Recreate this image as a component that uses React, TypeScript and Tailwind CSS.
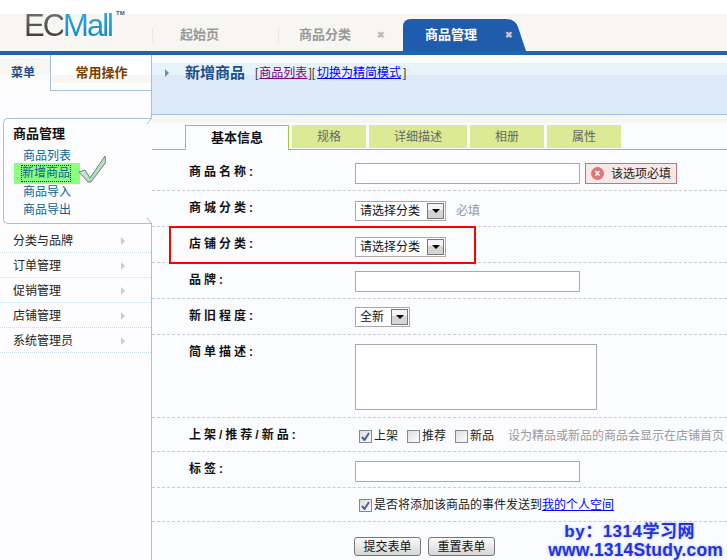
import type { ReactNode } from 'react'

const cjk = "font-['Liberation_Sans','Noto_Sans_CJK_SC',sans-serif]"

function NavTab({ label, closable, className }: { label: string; closable?: boolean; className: string }) {
  return (
    <div className={`flex h-[32px] items-center text-[13px] font-bold text-[#999] ${className}`}>
      <span className="h-[14px] w-px shrink-0 bg-[#f6e0e0]" />
      <span className="ml-[var(--gap)]">{label}</span>
      {closable && <span className="ml-[26px] text-[9px] leading-none text-[#bbb]">✖</span>}
    </div>
  )
}

function ActiveTab() {
  return (
    <div className="relative flex h-[32px] w-[123px] items-center pl-[22px] text-[13px] font-bold text-white">
      {/* tab shape with the soft glow along its lower edge */}
      <svg className="absolute inset-0" width="123" height="32" viewBox="0 0 123 32">
        <defs>
          <radialGradient id="tabGlow" cx="0.5" cy="1" r="0.5">
            <stop offset="0" stopColor="#7d9fcf" />
            <stop offset="1" stopColor="#7d9fcf" stopOpacity="0" />
          </radialGradient>
        </defs>
        <path d="M0 32V8Q0 0 8 0H103Q112 0 115 8L123 32Z" fill="#1f5dac" />
        <ellipse cx="62" cy="32" rx="36" ry="13" fill="url(#tabGlow)" />
      </svg>
      <span className="relative">商品管理</span>
      <span className="relative ml-[28px] text-[9px] leading-none text-[#c8c8c8]">✖</span>
    </div>
  )
}

function Corner({ flip }: { flip?: boolean }) {
  return (
    <svg
      className={`absolute right-0 ${flip ? 'bottom-[-1px] -scale-y-100' : 'top-[-1px]'}`}
      width="6"
      height="6"
      viewBox="0 0 6 6"
    >
      <path d="M0 6H1L6 0" fill="none" stroke="#a6c0da" />
    </svg>
  )
}

function CheckMark() {
  return (
    <svg width="28" height="29" viewBox="0 0 28 29" className="absolute left-[74px] top-[36px]">
      <defs>
        <linearGradient id="tick" x1="0" y1="0" x2="1" y2="1">
          <stop offset="0" stopColor="#e4f4e4" />
          <stop offset="1" stopColor="#9fd0a6" />
        </linearGradient>
      </defs>
      <path d="M1 17L7 15L12 23L27 1L28 7L13 27L10 27Z" fill="url(#tick)" stroke="#64826f" />
    </svg>
  )
}

function Sidebar() {
  const items = ['分类与品牌', '订单管理', '促销管理', '店铺管理', '系统管理员']
  const links = ['商品列表', '新增商品', '商品导入', '商品导出']
  return (
    <aside className="flex w-[152px] shrink-0 flex-col bg-[#fdfdff]">
      <div className="flex h-[36px] border-r border-[#a6c0da]">
        <div className="flex w-[50px] items-center bg-[linear-gradient(#fff_3px,#f7f6f3_3px,#f7f6f3_20px,#fcfcfc_20px,#fcfcfc_28px,#fdfdff_28px)] pl-[11px] text-[12px] font-bold text-[#1d4f8f]">
          菜单
        </div>
        <div className="flex flex-1 items-center justify-center border-b border-l border-[#a6c0da] bg-[linear-gradient(#fff_20px,#f7f6f3_20px,#f7f6f3_28px,#fff_28px)] pl-[1px] text-[13px] font-bold text-[#7a3e00]">
          常用操作
        </div>
      </div>
      <div className="h-[27px] border-r border-[#a6c0da]" />
      <div className="relative ml-[3px] h-[106px] rounded-l-[5px] border-y border-l border-[#a6c0da] pl-[9px] pt-[6px]">
        <Corner />
        <Corner flip />
        <div className="text-[13px] font-bold leading-[18px] text-[#111]">商品管理</div>
        <div className="mt-[4px] text-[12px] leading-[18px] text-[#0b6594]">
          {links.map((link) =>
            link === '新增商品' ? (
              <div key={link} className="-mb-[1px] -mt-[2px] ml-[1px] flex h-[21px] w-[66px] items-center bg-[#8aff80]">
                <span className="ml-[8px] leading-[15px] outline-1 outline-dotted outline-[#222]">{link}</span>
              </div>
            ) : (
              <div key={link} className="ml-[10px]">
                {link}
              </div>
            ),
          )}
        </div>
        <CheckMark />
      </div>
      <div className="flex flex-1 flex-col border-r border-[#a6c0da] pt-[4px]">
        {items.map((item) => (
          <div
            key={item}
            className="flex h-[25px] shrink-0 items-center justify-between border-b border-dotted border-[#c4dcec] pl-[13px] pr-[26px] pt-[2px] text-[12px] text-[#222]"
          >
            <span>{item}</span>
            <span className="h-0 w-0 border-y-[4px] border-l-[4px] border-y-transparent border-l-[#ccc]" />
          </div>
        ))}
      </div>
    </aside>
  )
}

function Select({ value, className }: { value: string; className: string }) {
  return (
    <div className={`flex h-[20px] items-center justify-between border border-[#a9a9a9] bg-white pl-[4px] pr-[1px] text-[12px] text-[#111] ${className}`}>
      <span>{value}</span>
      <span className="flex h-[16px] w-[17px] items-center justify-center border border-[#777] bg-[linear-gradient(#f4f4f4_40%,#d4d4d4_40%)]">
        <span className="h-0 w-0 border-x-[4px] border-t-[4px] border-x-transparent border-t-black" />
      </span>
    </div>
  )
}

function Checkbox({ checked, label }: { checked?: boolean; label: ReactNode }) {
  return (
    <span className="flex items-center gap-[2px]">
      <span className="flex h-[13px] w-[13px] items-center justify-center border border-[#888] bg-[linear-gradient(135deg,#ddd,#fff)]">
        {checked && (
          <svg width="9" height="9" viewBox="0 0 9 9">
            <path d="M1 5L3.5 8L8 1" fill="none" stroke="#4a5fa8" strokeWidth="2" />
          </svg>
        )}
      </span>
      <span>{label}</span>
    </span>
  )
}

function Row({
  label,
  children,
  className,
  labelClassName = '',
}: {
  label?: string
  children: ReactNode
  className: string
  labelClassName?: string
}) {
  return (
    <div className={`flex shrink-0 border-b border-dashed border-[#ccc] pl-[37px] ${className}`}>
      <div className={`w-[166px] shrink-0 text-[12px] font-bold leading-[16px] tracking-[3px] text-[#111] ${labelClassName}`}>{label}</div>
      <div className="flex min-w-0 flex-1 items-start whitespace-nowrap text-[12px] text-[#222]">{children}</div>
    </div>
  )
}

const inputClass = 'h-[21px] w-[225px] border border-[#a9a9a9] bg-white'

function FormArea() {
  const tabs = [
    { label: '规格', width: 'w-[74px]' },
    { label: '详细描述', width: 'w-[98px]' },
    { label: '相册', width: 'w-[74px]' },
    { label: '属性', width: 'w-[74px]' },
  ]
  return (
    <main className="flex min-w-0 flex-1 flex-col bg-[#fbfcff]">
      <div className="h-[60px] shrink-0 border-b border-[#a6c0da] bg-[linear-gradient(#fdfdfd_8px,#e7f3fa_8px,#e7f3fa_20px,#dce9f6_20px)]">
        <div className="flex items-center pl-[13px] pt-[8px]">
          <span className="h-0 w-0 border-y-[4px] border-l-[4px] border-y-transparent border-l-[#7a8a9a]" />
          <span className="ml-[16px] text-[15px] font-bold leading-[20px] text-[#1d4f8f]">新增商品</span>
          <span className="ml-[10px] text-[12px] text-[#444]">
            [<span className="mx-[1px] text-[#800080] underline">商品列表</span>][
            <span className="mx-[2px] text-[#0000ff] underline">切换为精简模式</span>]
          </span>
        </div>
      </div>
      <div className="flex h-[35px] shrink-0 items-end gap-[3px] border-b border-[#a4c639] bg-[linear-gradient(#f7f6f3_8px,#fbfcff_8px)] pl-[33px]">
        <div className="-mb-px flex h-[25px] w-[104px] items-center justify-center border-x border-t border-[#a4c639] bg-[#fbfcff] text-[13px] font-bold text-[#111]">
          基本信息
        </div>
        {tabs.map((tab) => (
          <div key={tab.label} className={`mb-[1px] flex h-[23px] items-center justify-center bg-[#dcea96] text-[12px] text-[#666] ${tab.width}`}>
            {tab.label}
          </div>
        ))}
      </div>
      <Row label="商品名称:" className="h-[41px] pt-[13px]" labelClassName="mt-[1px]">
        <div className={inputClass} />
        <div className="ml-[5px] flex h-[21px] w-[92px] items-center border border-[#d07070] bg-[#f9e8e8] pl-[5px] text-[#222]">
          <span className="flex h-[13px] w-[13px] items-center justify-center rounded-full bg-[#d87878] text-[10px] font-bold leading-none text-white">×</span>
          <span className="ml-[7px]">该选项必填</span>
        </div>
      </Row>
      <Row label="商城分类:" className="h-[36px] pt-[10px]" labelClassName="-mt-[1px]">
        <Select value="请选择分类" className="w-[91px]" />
        <span className="ml-[10px] mt-[1px] text-[#999]">必填</span>
      </Row>
      <Row label="店铺分类:" className="h-[36px] pt-[10px]" labelClassName="-mt-[1px]">
        <Select value="请选择分类" className="w-[91px]" />
      </Row>
      <Row label="品牌:" className="h-[36px] pt-[8px]" labelClassName="mt-[1px]">
        <div className={inputClass} />
      </Row>
      <Row label="新旧程度:" className="h-[36px] pt-[8px]" labelClassName="mt-[1px]">
        <Select value="全新" className="w-[55px]" />
      </Row>
      <Row label="简单描述:" className="h-[83px] pt-[9px]">
        <div className="h-[66px] w-[242px] border border-[#a9a9a9] bg-white" />
      </Row>
      <Row label="上架/推荐/新品:" className="h-[34px] pt-[10px]" labelClassName="-mt-[1px] tracking-[2.5px]">
        <div className="ml-[4px] flex items-center gap-[9px] leading-[16px]">
          <Checkbox checked label="上架" />
          <Checkbox label="推荐" />
          <Checkbox label="新品" />
          <span className="ml-[5px] text-[#999]">设为精品或新品的商品会显示在店铺首页</span>
        </div>
      </Row>
      <Row label="标签:" className="h-[36px] pt-[9px]">
        <div className={inputClass} />
      </Row>
      <Row className="h-[34px] pt-[9px]">
        <div className="ml-[4px] leading-[16px]">
          <Checkbox
            checked
            label={
              <>
                是否将添加该商品的事件发送到<span className="text-[#0000ff] underline">我的个人空间</span>
              </>
            }
          />
        </div>
      </Row>
      <div className="flex gap-[7px] pl-[202px] pt-[15px]">
        {['提交表单', '重置表单'].map((text) => (
          <button
            key={text}
            className="h-[19px] w-[67px] rounded-[3px] border border-[#777] bg-[linear-gradient(#fbfbfb,#d6d6d6)] text-[12px] leading-none text-[#111]"
          >
            {text}
          </button>
        ))}
      </div>
    </main>
  )
}

export default function App() {
  return (
    <div className={`relative flex h-[560px] w-[727px] flex-col overflow-hidden bg-white ${cjk}`}>
      <header className="mt-[14px] flex h-[37px] shrink-0 items-end bg-[#f7f6f3]">
        <div className="relative h-[37px] w-[152px] shrink-0 pl-[24px] text-[31px] leading-[23px] tracking-[-2px]">
          <span className="bg-[linear-gradient(#777,#333)] bg-clip-text text-transparent">EC</span>
          <span className="bg-[linear-gradient(#2fb0e6,#0f7fc0)] bg-clip-text text-transparent">Mall</span>
          <span className="absolute left-[116px] top-[-5px] text-[6px] font-bold leading-[9px] tracking-normal text-[#555]">TM</span>
        </div>
        <NavTab label="起始页" className="w-[126px] [--gap:27px]" />
        <NavTab label="商品分类" closable className="w-[125px] [--gap:20px]" />
        <ActiveTab />
      </header>
      <div className="h-[4px] shrink-0 bg-[#1f64b0]" />
      <div className="flex min-h-0 flex-1">
        <Sidebar />
        <FormArea />
      </div>
      {/* red callout and watermark sit on top of the screenshot content */}
      <div className="pointer-events-none absolute left-[169px] top-[226px] h-[38px] w-[307px] border-2 border-[#ff0000]" />
      <div className="pointer-events-none absolute right-[4px] top-[522px] text-center font-bold text-[#2233dd] [text-shadow:0_0_3px_#aab4f0]">
        <div className="pr-[12px] text-[17px] leading-[19px] tracking-[0.5px]">by：1314学习网</div>
        <div className="text-[17.5px] leading-[19px] tracking-[0.15px]">www.1314Study.com</div>
      </div>
    </div>
  )
}
